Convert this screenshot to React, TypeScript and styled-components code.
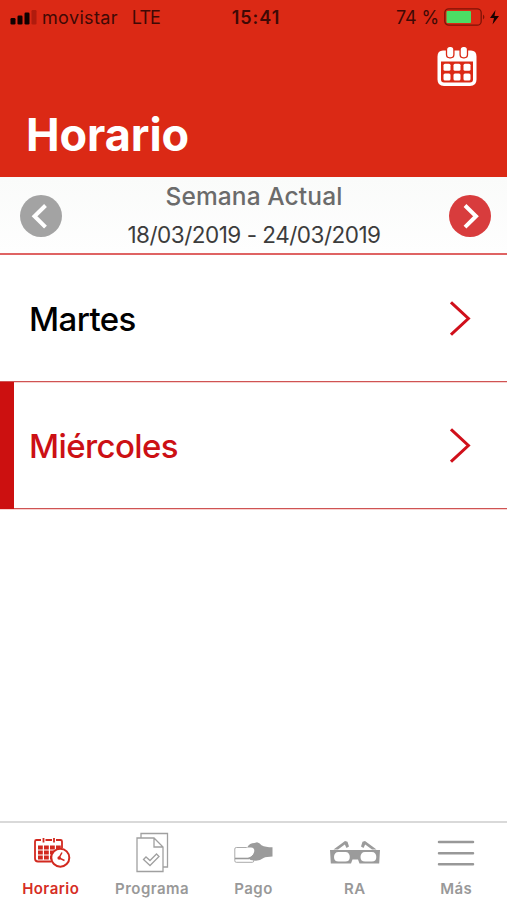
import React from "react";
import styled, { createGlobalStyle } from "styled-components";

const GlobalStyle = createGlobalStyle`
  * { box-sizing: border-box; }
  html, body { margin: 0; padding: 0; background: #fff; }
  body { font-family: Inter, "Liberation Sans", sans-serif; overflow: hidden; }
  svg { display: block; flex: none; }
`;

const Screen = styled.div`
  width: 507px;
  height: 900px;
  display: flex;
  flex-direction: column;
  background: #fff;
`;

const Header = styled.header`
  height: 177px;
  flex: none;
  background: #db2915;
  display: flex;
  flex-direction: column;
`;

const StatusBar = styled.div`
  height: 34px;
  display: grid;
  grid-template-columns: 1fr 60px 1fr;
  align-items: center;
  padding: 0 8px 0 10px;
  color: #3f0905;
  font-size: 18px;
  line-height: 36px;
`;

const StatusGroup = styled.div<{ $end?: boolean }>`
  display: flex;
  align-items: center;
  justify-content: ${(p) => (p.$end ? "flex-end" : "flex-start")};
  white-space: nowrap;

  svg { margin-bottom: 2px; }
`;

const Carrier = styled.span`
  margin-left: 5px;
  letter-spacing: 0.35px;
`;

const Network = styled.span`
  margin-left: 14px;
  letter-spacing: -0.9px;
`;

const Clock = styled.span`
  text-align: center;
  font-weight: 600;
  letter-spacing: 1px;
  padding-left: 3px;
`;

const Charge = styled.span`
  margin-right: 5px;
  letter-spacing: -0.1px;
`;

const HeaderActions = styled.div`
  display: flex;
  justify-content: flex-end;
  padding: 12px 30px 0 0;
`;

const Title = styled.h1`
  margin: 19px 0 0 26px;
  color: #fff;
  font-size: 45px;
  line-height: 58px;
  font-weight: 700;
  letter-spacing: -0.05px;
`;

const WeekBar = styled.div`
  height: 78px;
  flex: none;
  display: flex;
  justify-content: space-between;
  padding: 0 16px 0 20px;
  background: linear-gradient(#fafbfa, #fefefe);
  border-bottom: 2px solid #df6363;
`;

const WeekButton = styled.button<{ $active?: boolean }>`
  width: 42px;
  height: 42px;
  margin: 18px 0 0;
  padding: 0;
  border: 0;
  border-radius: 50%;
  background: ${(p) => (p.$active ? "#d83c3d" : "#a3a3a3")};
`;

const WeekText = styled.div`
  display: flex;
  flex-direction: column;
  align-items: center;
  white-space: nowrap;
`;

const WeekLabel = styled.div`
  color: #6b6b6b;
  font-size: 24.5px;
  font-weight: 500;
  line-height: 38px;
  letter-spacing: 0.1px;
  padding-right: 3px;
`;

const WeekRange = styled.div`
  color: #3c3c3c;
  font-size: 22.5px;
  line-height: 39px;
  font-weight: 400;
  letter-spacing: -0.5px;
  padding-right: 3px;
`;

const DayRow = styled.div<{ $current?: boolean }>`
  height: 127px;
  flex: none;
  display: flex;
  align-items: center;
  justify-content: space-between;
  padding: 0 36px 0 ${(p) => (p.$current ? "15px" : "29px")};
  border-left: ${(p) => (p.$current ? "14px solid #cc1010" : "0")};
  color: ${(p) => (p.$current ? "#cc1014" : "#000")};
  box-shadow: 0 1px #f8d2d0, inset 0 -1px #cf5353;
`;

const DayName = styled.span`
  font-size: 33px;
  font-weight: 500;
  line-height: 44px;
  letter-spacing: -0.6px;
`;

const Spacer = styled.div`
  flex: 1;
`;

const TabBar = styled.nav`
  height: 79px;
  flex: none;
  display: grid;
  grid-template-columns: repeat(5, 1fr);
  padding-top: 1px;
  border-top: 2px solid #d9d9d9;
`;

const Tab = styled.div<{ $active?: boolean }>`
  display: flex;
  flex-direction: column;
  align-items: center;
  color: ${(p) => (p.$active ? "#d62d24" : "#999")};
`;

const TabLabel = styled.span`
  margin-top: 4px;
  font-size: 15px;
  line-height: 22px;
  font-weight: 600;
  letter-spacing: 0.45px;
`;

const SignalIcon = () => (
  <svg width="27" height="16" viewBox="0 0 27 16">
    <g fill="#100100">
      <rect x="0.5" y="9" width="5" height="6.5" rx="1.3" />
      <rect x="7.5" y="6.5" width="5" height="9" rx="1.3" />
      <rect x="14.5" y="3.5" width="5" height="12" rx="1.3" />
    </g>
    <rect x="21.5" y="1" width="5" height="14.5" rx="1.3" fill="#b01b0d" />
  </svg>
);

const BatteryIcon = () => (
  <svg width="55" height="20" viewBox="0 0 55 20">
    <rect x="0.8" y="1.8" width="36.4" height="16.4" rx="4" fill="none" stroke="#7e1206" strokeWidth="1.3" />
    <rect x="2.5" y="4" width="24.5" height="12" rx="1" fill="#4cdc64" />
    <path d="M39 7.5q2.8 2.5 0 5z" fill="#7e1206" />
    <path d="M51.500 3 46 11h4l-1.500 6.500 6.500-8.500h-4.500z" fill="#180200" />
  </svg>
);

const CalendarIcon = () => (
  <svg width="40" height="41" viewBox="0 0 40 41">
    <path fill="#fff" fillRule="evenodd" d="M6 4.500h28q5.500 0 5.500 6v23q0 6.500-6.500 6.500H7Q.5 40 .5 33.500v-23Q.5 4.500 6 4.500zM4 15.500v18q0 3 3 3h26q3 0 3-3v-18z" />
    <g fill="#fff" stroke="#db2915" strokeWidth="1.300">
      <rect x="9.500" y=".3" width="7.400" height="11.500" rx="3.200" />
      <rect x="23.100" y=".3" width="7.400" height="11.500" rx="3.200" />
    </g>
    <g fill="#fff">
      {[17.7, 27.5].map((y) => [6.5, 16.5, 26.5].map((x) => (
        <rect key={`${x}-${y}`} x={x} y={y} width="7" height="7" rx="1.5" />
      )))}
    </g>
  </svg>
);

const WeekArrow = ({ back = false }: { back?: boolean }) => (
  <svg width="42" height="42" viewBox="0 0 42 42" fill="none" stroke="#fff" strokeWidth="4">
    <path d={back ? "M25.500 10.500 14.500 21.200l11 11" : "M16 10.500 27 21.200l-11 11"} />
  </svg>
);

const RowArrow = () => (
  <svg width="21" height="36" viewBox="0 0 21 36" fill="none" stroke="#d0101b" strokeWidth="3">
    <path d="M1 1.300 18.400 17.500 1 33.700" />
  </svg>
);

const ScheduleIcon = () => (
  <svg width="50" height="50" viewBox="0 0 50 50" fill="none" stroke="#d2291f" strokeWidth="1.800">
    <path d="M25 37.500H12q-3 0-3-3V17.500q0-1.500 1.500-1.500H15M19.500 16H26M30 16h4.500q1.500 0 1.500 1.500V24M17.500 14v4.500M28 14v4.500" />
    <g fill="#d2291f" stroke="none">
      {[21.5, 26.5, 31.5].map((y) => [12, 18, 24, 30].map((x) => (
        <rect key={`${x}-${y}`} x={x} y={y} width="4.800" height="4" />
      )))}
    </g>
    <circle cx="34.300" cy="33.700" r="9" fill="#fff" strokeWidth="2" />
    <path d="m36 28.500-3 5.500 5.500 2.500" strokeWidth="1.500" />
    <circle cx="33.200" cy="34" r="1.800" fill="#d2291f" stroke="none" />
  </svg>
);

const ProgramIcon = () => (
  <svg width="50" height="50" viewBox="0 0 50 50" fill="none" stroke="#a0a0a0" strokeWidth="1.300">
    <path d="M14 14V9.500h26.500v33.500H36" />
    <path d="M10 14h17l9 9V47.500H10zM27 14v9h9" />
    <path d="m16.500 35.500 2.500-2.500 4 3.500 6.500-6.500 2.500 2.500-9 9z" />
  </svg>
);

const PaymentIcon = () => (
  <svg width="50" height="50" viewBox="0 0 50 50">
    <rect x="6.800" y="23.500" width="19" height="14.800" rx="1.500" fill="#fff" stroke="#aaa" />
    <path fill="#9b9b9b" d="M19.500 23q2-4 7-4l2.500-.8q2.500.5 4.500 3 4 2 11 2v9.300q-6 0-9 1.500-4 3.200-9.500 2.500-4 0-6-2.500 4-1.500 5-4z" />
    <path d="M18.500 23.500h4.500q3.500 0 3.300 3.500-.5 3.500-4 5.500l-3.800 1z" fill="#fff" />
    <path d="M7 34.500h14" stroke="#999" strokeWidth="1.600" />
  </svg>
);

const GlassesIcon = () => (
  <svg width="54" height="50" viewBox="0 0 54 50" fill="#9b9b9b">
    <path d="m5.500 25.500 11.500-8.500 2.500.7 1.500 4.800-2.500 1.500-1.700-3.500-6.800 5zM48.500 25.500 37 17l-2.500.7-1.500 4.800 2.500 1.500 1.700-3.500 6.800 5z" />
    <path fillRule="evenodd" d="M2 26h50l-.8 13.500H31.500l-1.500-4h-5.500l-1.500 4H2.800zM10.500 28c-3 0-4.500 2-4.500 5s1.500 4.500 4.500 4.500h6.800c3 0 4.500-1.500 4.500-4.500s-1.500-5-4.500-5zM37 28c-3 0-4.500 2-4.500 5s1.500 4.500 4.500 4.500h6.800c3 0 4.500-1.500 4.500-4.500s-1.500-5-4.500-5z" />
  </svg>
);

const MoreIcon = () => (
  <svg width="50" height="50" viewBox="0 0 50 50" stroke="#989898" strokeWidth="2.500" strokeLinecap="round">
    <path d="M8 18h34M8 29.300h34M8 40.300h34" />
  </svg>
);

const tabs = [
  { label: "Horario", Icon: ScheduleIcon, active: true },
  { label: "Programa", Icon: ProgramIcon },
  { label: "Pago", Icon: PaymentIcon },
  { label: "RA", Icon: GlassesIcon },
  { label: "Más", Icon: MoreIcon },
];

export default function App() {
  return (
    <Screen>
      <GlobalStyle />
      <Header>
        <StatusBar>
          <StatusGroup>
            <SignalIcon />
            <Carrier>movistar</Carrier>
            <Network>LTE</Network>
          </StatusGroup>
          <Clock>15:41</Clock>
          <StatusGroup $end>
            <Charge>74 %</Charge>
            <BatteryIcon />
          </StatusGroup>
        </StatusBar>
        <HeaderActions><CalendarIcon /></HeaderActions>
        <Title>Horario</Title>
      </Header>
      <WeekBar>
        <WeekButton aria-label="Semana anterior"><WeekArrow back /></WeekButton>
        <WeekText>
          <WeekLabel>Semana Actual</WeekLabel>
          <WeekRange>18/03/2019 - 24/03/2019</WeekRange>
        </WeekText>
        <WeekButton $active aria-label="Semana siguiente"><WeekArrow /></WeekButton>
      </WeekBar>
      <DayRow><DayName>Martes</DayName><RowArrow /></DayRow>
      <DayRow $current><DayName>Miércoles</DayName><RowArrow /></DayRow>
      <Spacer />
      <TabBar>
        {tabs.map(({ label, Icon, active }) => (
          <Tab key={label} $active={active}>
            <Icon />
            <TabLabel>{label}</TabLabel>
          </Tab>
        ))}
      </TabBar>
    </Screen>
  );
}
